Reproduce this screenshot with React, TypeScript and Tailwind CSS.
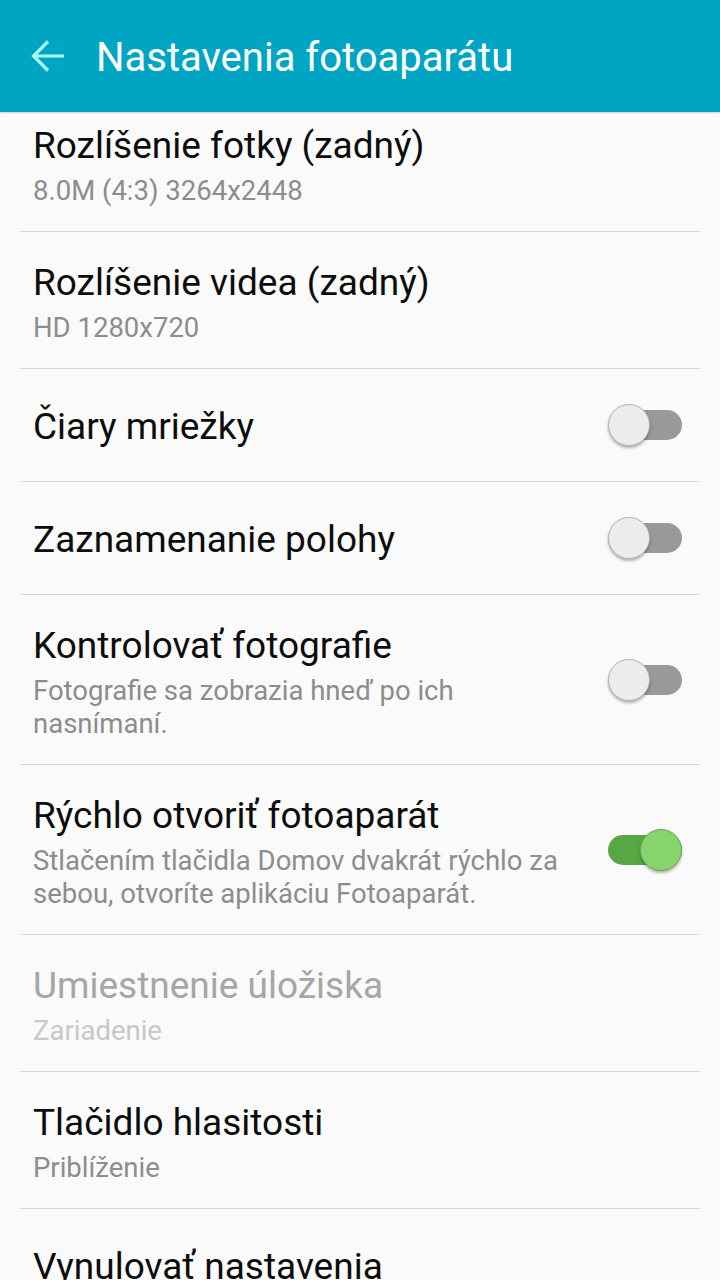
import React from "react";

type Row = {
  title: string;
  subtitle?: string;
  toggle?: "on" | "off";
  disabled?: boolean;
};

const rows: Row[] = [
  { title: "Rozlíšenie fotky (zadný)", subtitle: "8.0M (4:3) 3264x2448" },
  { title: "Rozlíšenie videa (zadný)", subtitle: "HD 1280x720" },
  { title: "Čiary mriežky", toggle: "off" },
  { title: "Zaznamenanie polohy", toggle: "off" },
  {
    title: "Kontrolovať fotografie",
    subtitle: "Fotografie sa zobrazia hneď po ich nasnímaní.",
    toggle: "off",
  },
  {
    title: "Rýchlo otvoriť fotoaparát",
    subtitle: "Stlačením tlačidla Domov dvakrát rýchlo za sebou, otvoríte aplikáciu Fotoaparát.",
    toggle: "on",
  },
  { title: "Umiestnenie úložiska", subtitle: "Zariadenie", disabled: true },
  { title: "Tlačidlo hlasitosti", subtitle: "Priblíženie" },
  { title: "Vynulovať nastavenia" },
];

function Toggle({ on }: { on: boolean }) {
  return (
    <div className="relative h-[42px] w-[74px] shrink-0">
      <div
        className={
          on
            ? "absolute left-0 right-0 top-[6px] h-[30px] rounded-full bg-[#58a744]"
            : "absolute left-[2px] right-0 top-[6px] h-[30px] rounded-full bg-[#999999]"
        }
      />
      <div
        className={
          on
            ? "absolute right-0 top-0 h-[42px] w-[42px] rounded-full border border-[#6aa957] bg-[#86d46c] shadow-[0_2px_3px_rgba(0,0,0,0.3)]"
            : "absolute left-0 top-0 h-[42px] w-[42px] rounded-full border border-[#b4b4b4] bg-[#ececec] shadow-[0_2px_3px_rgba(0,0,0,0.3)]"
        }
      />
    </div>
  );
}

function SettingRow({ row, first }: { row: Row; first: boolean }) {
  const titleColor = row.disabled ? "text-[#a6a6a6]" : "text-[#0d0d0d]";
  const subColor = row.disabled ? "text-[#c8c8c8]" : "text-[#8b8d8f]";
  const pad = row.subtitle
    ? first
      ? "pt-[6px] pb-[24px]"
      : "pt-[23px] pb-[24px]"
    : "pt-[30px] pb-[26px]";

  return (
    <div className="mx-[20px] flex items-center gap-[24px] border-b border-[#d6d6d6] pl-[13px] pr-[18px]">
      <div className={`min-w-0 flex-1 ${pad}`}>
        <div className={`text-[37px] leading-[56px] ${titleColor}`}>{row.title}</div>
        {row.subtitle ? (
          <div className={`text-[27.5px] leading-[33px] ${subColor}`}>{row.subtitle}</div>
        ) : null}
      </div>
      {row.toggle ? <Toggle on={row.toggle === "on"} /> : null}
    </div>
  );
}

export default function App() {
  return (
    <div className="flex h-[1280px] w-[720px] flex-col overflow-hidden bg-[#fafafa] font-['Roboto',sans-serif]">
      <header className="relative z-10 flex h-[112px] shrink-0 items-center bg-[#00a5c4] shadow-[0_1px_2px_rgba(0,0,0,0.18)]">
        <svg
          className="ml-[28px] h-[40px] w-[40px]"
          viewBox="0 0 40 40"
          fill="none"
          stroke="#a6fff3"
          strokeWidth="3.2"
          aria-hidden="true"
        >
          <path d="M5.5 20H36M20 5.5 5.5 20 20 34.5" />
        </svg>
        <h1 className="ml-[28px] mt-[4px] text-[40px] leading-none text-white">Nastavenia fotoaparátu</h1>
      </header>
      <div className="flex flex-col">
        {rows.map((row, i) => (
          <SettingRow key={row.title} row={row} first={i === 0} />
        ))}
      </div>
    </div>
  );
}
